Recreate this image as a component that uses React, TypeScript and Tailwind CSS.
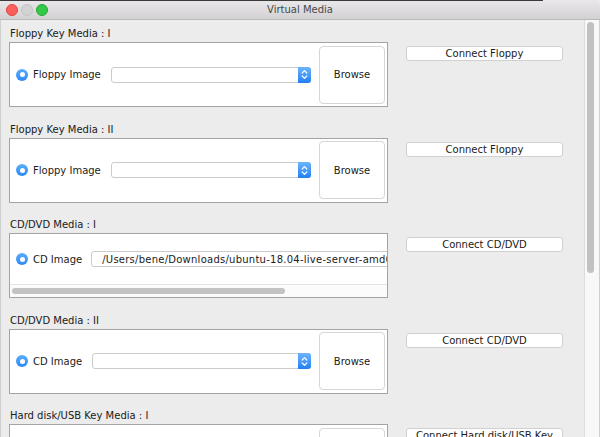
import { Fragment } from 'react'

type MediaSection = {
  label: string
  option: string
  button: string
  path?: string
}

const SECTIONS: MediaSection[] = [
  { label: 'Floppy Key Media : I', option: 'Floppy Image', button: 'Connect Floppy' },
  { label: 'Floppy Key Media : II', option: 'Floppy Image', button: 'Connect Floppy' },
  {
    label: 'CD/DVD Media : I',
    option: 'CD Image',
    button: 'Connect CD/DVD',
    path: '/Users/bene/Downloads/ubuntu-18.04-live-server-amd64.iso',
  },
  { label: 'CD/DVD Media : II', option: 'CD Image', button: 'Connect CD/DVD' },
  { label: 'Hard disk/USB Key Media : I', option: 'Hard disk Image', button: 'Connect Hard disk/USB Key' },
]

function Radio() {
  return (
    <span className="flex h-3 w-3 shrink-0 items-center justify-center rounded-full bg-gradient-to-b from-[#5aaefc] to-[#2c88f5]">
      <span className="h-[5px] w-[5px] rounded-full bg-white" />
    </span>
  )
}

function Combo() {
  return (
    <div className="flex h-4 min-w-0 flex-1 rounded-[3px] border border-[#cbcbcb] bg-white">
      <div className="flex-1" />
      <div className="-my-px -mr-px flex w-[13px] items-center justify-center rounded-r-[3px] bg-gradient-to-b from-[#6cb4fb] to-[#1f7ff4]">
        <svg width="7" height="11" viewBox="0 0 7 11" fill="none" stroke="white" strokeWidth="1.2" strokeLinecap="round" strokeLinejoin="round">
          <path d="M1.2 4 L3.5 1.7 L5.8 4" />
          <path d="M1.2 7 L3.5 9.3 L5.8 7" />
        </svg>
      </div>
    </div>
  )
}

function BrowseButton() {
  return (
    <div className="ml-2 mr-[2px] flex h-[58px] w-[66px] shrink-0 items-center justify-center rounded-[4px] border border-[#d6d6d6] bg-white text-[10px] text-[#1b1b1b]">
      Browse
    </div>
  )
}

function MediaBox({ section }: { section: MediaSection }) {
  if (section.path) {
    return (
      <div className="flex h-[65px] flex-col overflow-hidden border border-[#a4a4a4] bg-white">
        <div className="flex h-[50px] items-center overflow-hidden pl-[6px]">
          <Radio />
          <span className="ml-[5px] shrink-0 whitespace-nowrap">{section.option}</span>
          <div className="ml-[9px] flex h-4 w-[440px] shrink-0 items-center rounded-[3px] border border-[#cbcbcb] bg-white pl-[10px] tracking-[0.25px] whitespace-nowrap">
            {section.path}
          </div>
        </div>
        <div className="h-[13px] border-t border-[#e4e4e4] bg-[#fbfbfb] pl-[2px] pt-[3px]">
          <div className="h-[6px] w-[273px] rounded-full bg-[#c3c3c3]" />
        </div>
      </div>
    )
  }

  return (
    <div className="flex h-[65px] items-center border border-[#a4a4a4] bg-white pl-[6px]">
      <Radio />
      <span className="ml-[5px] shrink-0 whitespace-nowrap">{section.option}</span>
      <div className="ml-[10px] flex min-w-0 flex-1">
        <Combo />
      </div>
      <BrowseButton />
    </div>
  )
}

export default function App() {
  return (
    <div className="flex h-[437px] w-[600px] flex-col overflow-hidden bg-[#ececec] font-['DejaVu_Sans',sans-serif] text-[10px] text-[#1b1b1b]">
      {/* title bar */}
      <div className="relative flex h-5 shrink-0 items-center justify-center rounded-t-[5px] border-b border-[#b9b9b9] bg-gradient-to-b from-[#eae8ea] to-[#d3d1d3]">
        <div className="absolute left-0 top-0 h-px w-[543px] bg-[#3a3a3a]" />
        <div className="absolute left-[6px] top-[4px] flex gap-[3px]">
          <span className="h-3 w-3 rounded-full border border-[#e0443e] bg-[#fc605c]" />
          <span className="h-3 w-3 rounded-full border border-[#c4c4c4] bg-[#d3d3d3]" />
          <span className="h-3 w-3 rounded-full border border-[#1dad2b] bg-[#34c84a]" />
        </div>
        <span className="text-[10px] text-[#4a4a4a]">Virtual Media</span>
      </div>

      <div className="flex min-h-0 flex-1">
        <div className="min-w-0 flex-1 overflow-hidden border-l border-[#cfcfcf] pl-2 pt-[6px]">
          {SECTIONS.map(section => (
            <Fragment key={section.label}>
              <div className="flex h-[95.5px] shrink-0">
                <div className="flex w-[379px] shrink-0 flex-col">
                  <div className="h-4 pl-px leading-4 text-[#202020]">{section.label}</div>
                  <MediaBox section={section} />
                </div>
                <div className="ml-[18px] mt-5 flex h-[15px] w-[157px] shrink-0 items-center justify-center overflow-hidden whitespace-nowrap rounded-[3px] border border-[#d0d0d0] bg-white">
                  {section.button}
                </div>
              </div>
            </Fragment>
          ))}
        </div>

        {/* vertical scrollbar */}
        <div className="w-[15px] shrink-0 border-l border-[#dcdcdc] bg-[#f8f8f8] pl-[2px] pt-[2px]">
          <div className="h-[251px] w-[7px] rounded-full bg-[#c1c1c1]" />
        </div>
        <div className="w-px shrink-0 bg-[#cfcfcf]" />
      </div>
    </div>
  )
}
